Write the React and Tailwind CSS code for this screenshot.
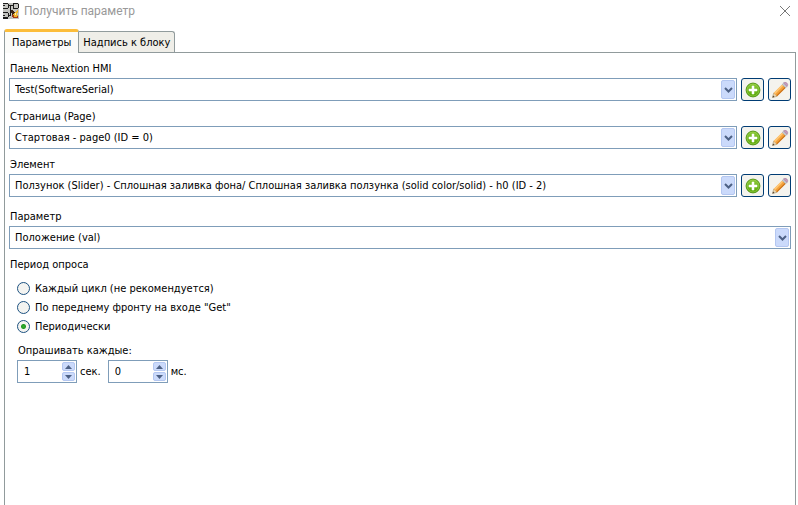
import { useState } from 'react';

const polls = [
  { id: 'cycle', label: 'Каждый цикл (не рекомендуется)' },
  { id: 'edge', label: 'По переднему фронту на входе "Get"' },
  { id: 'period', label: 'Периодически' },
];

function AppIcon() {
  return (
    <svg width="16" height="16" viewBox="0 0 16 16" shapeRendering="crispEdges" aria-hidden="true">
      <rect width="16" height="16" fill="#c4c4c0" />
      <path d="M0 0h5v1H0zM0 5h5v1H0zM5 1h1v4H5zM0 9h5v1H0zM0 14h5v2H0zM5 10h1v4H5z" fill="#1c1c1c" />
      <path d="M10 0h5v1h-5zM10 5h5v1h-5zM15 1h1v4h-1zM10 1h1v4h-1z" fill="#1c1c1c" />
      <path d="M6 2h4v1H6zM7 3h1v9H7zM6 12h2v1H6zM0 2h2v1H0zM0 12h2v1H0z" fill="#1c1c1c" />
      <path d="M8 7h2v1h1v1h1v2h-2v1H9v-2H8z" fill="#3a2416" />
      <path d="M14 7h1v3h-1v2h1v2h-2v1h-2v-2h-1v-2h1v-1h1V9h1V8h1z" fill="#f0b62c" />
      <path d="M9 12h2v2h2v1h-3v-1H9zM14 13h1v2h-2v-1h1z" fill="#a33a16" />
      <path d="M12 10h1v2h-1z" fill="#fff3b0" />
    </svg>
  );
}

function AddIcon() {
  return (
    <svg width="16" height="16" viewBox="0 0 16 16" aria-hidden="true">
      <defs>
        <linearGradient id="addFill" x1="0" y1="0" x2="0" y2="1">
          <stop offset="0" stopColor="#8fca3c" />
          <stop offset="1" stopColor="#58a808" />
        </linearGradient>
      </defs>
      <circle cx="8" cy="8" r="6.9" fill="url(#addFill)" stroke="#4f9314" strokeWidth="1" />
      <circle cx="8" cy="8" r="6" fill="none" stroke="#9fd052" strokeWidth="0.6" />
      <path d="M7 4h2v3h3v2H9v3H7V9H4V7h3z" fill="#fff" stroke="#fff" strokeWidth="0.5" />
    </svg>
  );
}

function PencilIcon() {
  return (
    <svg width="18" height="18" viewBox="0 0 18 18" className="shrink-0" aria-hidden="true">
      <path d="M1.5 16.5 2.7 12 6.1 15.3z" fill="#ecd9b4" stroke="#a8926c" strokeWidth="0.6" />
      <path d="M1.5 16.5 2.1 14.5 3.5 15.9z" fill="#4a3d30" />
      <path d="M2.7 12 11.2 3.4 14.7 6.8 6.1 15.3z" fill="#f5a23a" />
      <path d="M3 11.8 11.2 3.4 12.4 4.5 4.2 13z" fill="#ffc878" />
      <path d="M5.3 14.5 13.9 6 14.7 6.8 6.1 15.3z" fill="#c9711a" />
      <path d="M11.2 3.4 12.6 2 16.1 5.4 14.7 6.8z" fill="#c8ccd2" stroke="#8d9097" strokeWidth="0.4" />
      <path d="M12.6 2q1.2-1.1 2.5-.4 1.4.6 1.6 1.9.1 1.1-.6 1.9z" fill="#c79bc0" stroke="#96708f" strokeWidth="0.5" />
    </svg>
  );
}

function SelectBox({ id, value }) {
  return (
    <div className="relative min-w-0 flex-1">
      <select
        id={id}
        defaultValue={value}
        className="block h-[23px] w-full appearance-none border border-[#7f9db9] bg-white pt-px pr-5 pl-[5px] text-[11px] text-black outline-none"
      >
        <option value={value}>{value}</option>
      </select>
      <span className="pointer-events-none absolute top-[2px] right-[2px] flex h-[19px] w-[14px] items-center justify-center rounded-xs border border-[#b4c7f1] bg-[#cbdafb]">
        <svg width="9" height="6" viewBox="0 0 9 6" aria-hidden="true">
          <path d="M1 1 4.5 4.5 8 1" fill="none" stroke="#4d6185" strokeWidth="2" />
        </svg>
      </span>
    </div>
  );
}

function IconButton({ label, children }) {
  return (
    <button
      type="button"
      aria-label={label}
      className="flex h-[23px] w-[23px] shrink-0 items-center justify-center rounded-[3px] border border-[#003c74] bg-[#f4f3ee]"
    >
      {children}
    </button>
  );
}

function Field({ id, label, value, editable }) {
  return (
    <div className="flex flex-col gap-px">
      <label htmlFor={id} className="self-start pl-px">{label}</label>
      <div className="flex gap-1">
        <SelectBox id={id} value={value} />
        {editable && (
          <>
            <IconButton label="Добавить"><AddIcon /></IconButton>
            <IconButton label="Изменить"><PencilIcon /></IconButton>
          </>
        )}
      </div>
    </div>
  );
}

function Spinner({ id, unit, initial }) {
  const [value, setValue] = useState(initial);

  const step = (delta) => setValue(Math.max(0, Number(value) + delta));

  return (
    <div className="flex items-center gap-[3px]">
      <div className="flex h-[23px] w-[60px] border border-[#7f9db9] bg-white p-px">
        <input
          id={id}
          type="text"
          inputMode="numeric"
          value={value}
          onChange={(e) => setValue(e.target.value.replace(/\D/g, ''))}
          className="min-w-0 flex-1 pt-px pl-[5px] outline-none"
        />
        <div className="flex w-[13px] flex-col gap-px">
          <button
            type="button"
            aria-label="Больше"
            onClick={() => step(1)}
            className="flex flex-1 items-center justify-center rounded-xs border border-[#b4c7f1] bg-[#cbdafb]"
          >
            <svg width="7" height="4" viewBox="0 0 7 4" aria-hidden="true">
              <path d="M0 4 3.5 0 7 4z" fill="#4d6185" />
            </svg>
          </button>
          <button
            type="button"
            aria-label="Меньше"
            onClick={() => step(-1)}
            className="flex flex-1 items-center justify-center rounded-xs border border-[#b4c7f1] bg-[#cbdafb]"
          >
            <svg width="7" height="4" viewBox="0 0 7 4" aria-hidden="true">
              <path d="M0 0 3.5 4 7 0z" fill="#4d6185" />
            </svg>
          </button>
        </div>
      </div>
      <label htmlFor={id}>{unit}</label>
    </div>
  );
}

function App() {
  const [poll, setPoll] = useState('period');

  return (
    <div className="flex min-h-screen flex-col bg-white font-['Tahoma','DejaVu_Sans_Condensed',sans-serif] text-[11px] leading-4 text-black">
      <header className="flex h-[22px] items-center gap-[5px] pr-[7px] pl-[3px]">
        <AppIcon />
        <h1 className="flex-1 font-['Segoe_UI','Roboto',sans-serif] text-xs text-[#999999]">Получить параметр</h1>
        <button type="button" aria-label="Закрыть" className="p-px">
          <svg width="10" height="10" viewBox="0 0 10 10" aria-hidden="true">
            <path d="M0 0 10 10M10 0 0 10" stroke="#777" strokeWidth="1" />
          </svg>
        </button>
      </header>

      {/* Tabs */}
      <div role="tablist" className="z-10 mt-[7px] -mb-px flex items-end pl-1">
        <button
          type="button"
          role="tab"
          aria-selected="true"
          className="h-6 rounded-t-[3px] border-x border-t-[3px] border-x-[#919b9c] border-t-[#fcbd3a] bg-[#fbfbf9] px-[7px] pt-px"
        >
          Параметры
        </button>
        <button
          type="button"
          role="tab"
          aria-selected="false"
          className="mb-px h-[21px] rounded-tr-[3px] border-t border-r border-[#919b9c] bg-[#efeee8] px-1 pt-px"
        >
          Надпись к блоку
        </button>
      </div>

      <main className="mr-[2px] ml-1 flex flex-1 flex-col border border-b-0 border-[#919b9c] px-1 pt-2">
        <div className="flex flex-col gap-2">
          <Field id="panel" label="Панель Nextion HMI" value="Test(SoftwareSerial)" editable />
          <Field id="page" label="Страница (Page)" value="Стартовая - page0 (ID = 0)" editable />
          <Field
            id="element"
            label="Элемент"
            value="Ползунок (Slider) - Сплошная заливка фона/ Сплошная заливка ползунка (solid color/solid) - h0 (ID - 2)"
            editable
          />
        </div>
        <div className="mt-3">
          <Field id="param" label="Параметр" value="Положение (val)" />
        </div>

        {/* Polling period */}
        <fieldset className="mt-2">
          <legend className="pl-px">Период опроса</legend>
          <div className="flex flex-col gap-[3px] pt-2 pl-2">
            {polls.map((p) => (
              <label key={p.id} className="flex items-center gap-[5px] self-start">
                <input
                  type="radio"
                  name="poll"
                  checked={poll === p.id}
                  onChange={() => setPoll(p.id)}
                  className="mb-px h-[13px] w-[13px] appearance-none rounded-full border border-[#1d5281] bg-[#f4f4f1] checked:bg-[radial-gradient(circle,#3aae36_0px,#219a21_2px,#f4f4f1_3px)]"
                />
                {p.label}
              </label>
            ))}
          </div>
          <div className="pt-2 pl-2">
            <div className="pl-px">Опрашивать каждые:</div>
            <div className="mt-px flex gap-[7px]">
              <Spinner id="sec" unit="сек." initial={1} />
              <Spinner id="msec" unit="мс." initial={0} />
            </div>
          </div>
        </fieldset>
      </main>
    </div>
  );
}

export default App;
